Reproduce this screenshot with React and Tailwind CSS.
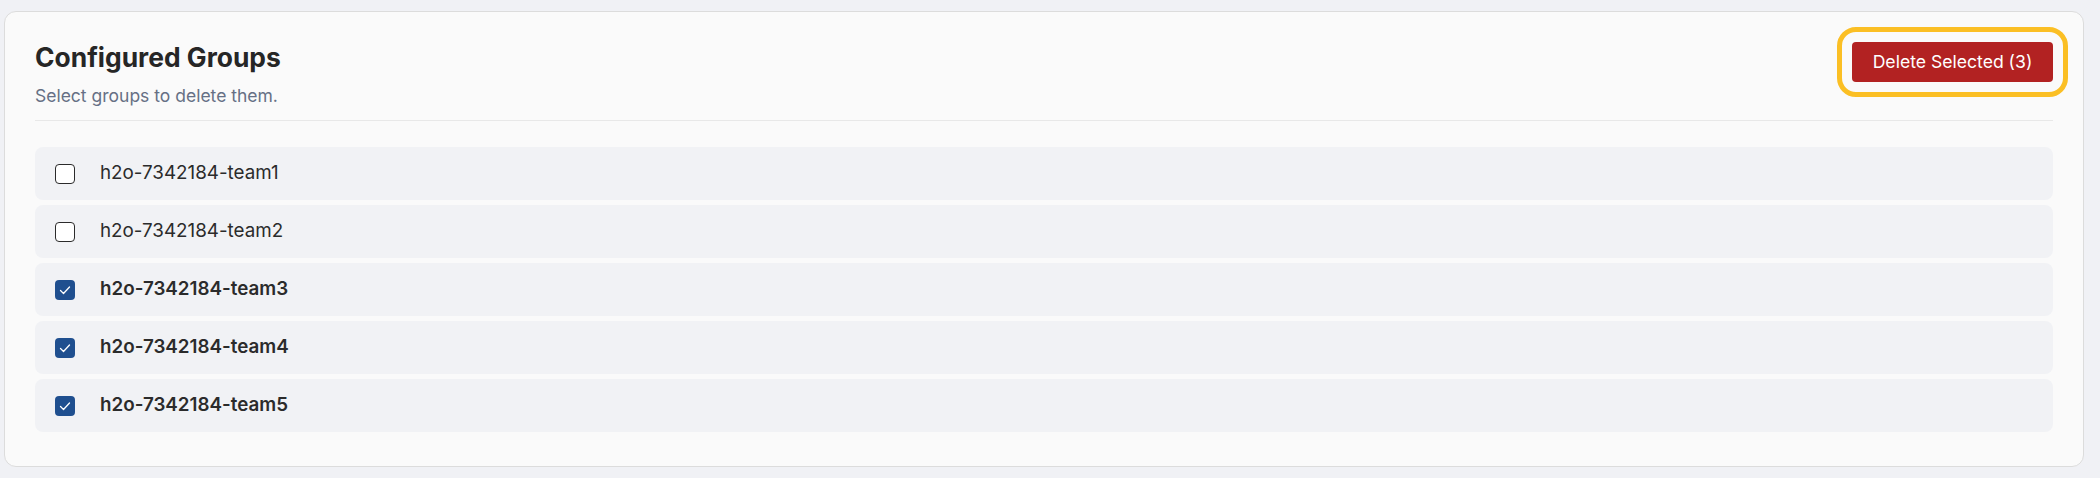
import { useState } from "react";

const GROUPS = [
  "h2o-7342184-team1",
  "h2o-7342184-team2",
  "h2o-7342184-team3",
  "h2o-7342184-team4",
  "h2o-7342184-team5",
];

export default function App() {
  const [selected, setSelected] = useState(["h2o-7342184-team3", "h2o-7342184-team4", "h2o-7342184-team5"]);

  const toggle = (g) =>
    setSelected((s) => (s.includes(g) ? s.filter((x) => x !== g) : [...s, g]));

  return (
    <div className="min-h-[478px] bg-[#f0f1f5] pt-[11px] pl-[4px] pr-[16px] font-['Inter',sans-serif]">
      <div className="w-[2080px] rounded-[12px] border border-[#dcdcdc] bg-[#fafafa] px-[30px] pt-[29px] pb-[34px]">
        {/* Header */}
        <div className="flex items-start justify-between border-b border-[#e8e8e8] pb-[13px]">
          <div>
            <h2 className="text-[26.4px] leading-[32px] font-bold text-[#262626]">Configured Groups</h2>
            <p className="mt-[12px] text-[17.5px] leading-[22px] text-[#667085]">Select groups to delete them.</p>
          </div>
          <button className="mt-[1px] h-[40px] w-[201px] rounded-[4px] bg-[#b22222] text-[17.6px] text-white outline-[5px] outline-[#fbbf24] outline-offset-[10px] outline-solid">
            Delete Selected ({selected.length})
          </button>
        </div>

        {/* List */}
        <div className="mt-[26px] flex flex-col gap-[5px]">
          {GROUPS.map((g) => {
            const on = selected.includes(g);
            return (
              <label
                key={g}
                className="flex h-[53px] cursor-pointer items-center rounded-[8px] bg-[#f1f2f5] pl-[20px]"
                onClick={() => toggle(g)}
              >
                {on ? (
                  <span className="flex h-[20px] w-[20px] items-center justify-center rounded-[4px] bg-[#1f4f8f]">
                    <svg viewBox="0 0 20 20" className="h-[20px] w-[20px]" fill="none" stroke="white" strokeWidth="1.3" strokeLinecap="round" strokeLinejoin="round">
                      <path d="M5.5 10.5l3 3 6-6.5" />
                    </svg>
                  </span>
                ) : (
                  <span className="h-[20px] w-[20px] rounded-[4px] border-[1.5px] border-[#2b2b2b] bg-white" />
                )}
                <span className={`ml-[25px] text-[18.8px] text-[#2b2b2b] ${on ? "font-semibold" : "font-normal"}`}>{g}</span>
              </label>
            );
          })}
        </div>
      </div>
    </div>
  );
}
